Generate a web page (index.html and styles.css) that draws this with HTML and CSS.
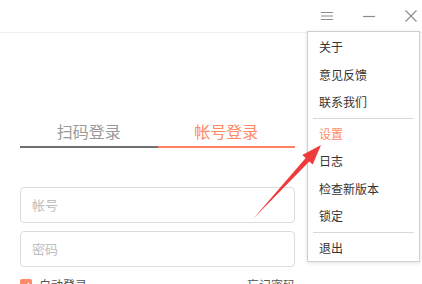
FILE: index.html
```html
<!DOCTYPE html>
<html lang="zh-CN">
<head>
    <meta charset="UTF-8">
    <meta name="viewport" content="width=device-width, initial-scale=1.0">
    <title>登录</title>
    <link rel="stylesheet" href="styles.css">
</head>
<body>
    <div class="window">
        <div class="titlebar">
            <span class="tb-btn">
                <svg width="12" height="10" viewBox="0 0 12 10"><path d="M0 1.5H12M0 5H12M0 8.5H12" stroke="#8a8a8a" stroke-width="1"/></svg>
            </span>
            <span class="tb-btn">
                <svg width="12" height="10" viewBox="0 0 12 10"><path d="M0 5.5H12" stroke="#8a8a8a" stroke-width="1.2"/></svg>
            </span>
            <span class="tb-btn">
                <svg width="12" height="12" viewBox="0 0 12 12"><path d="M0.5 0.5L11.5 11.5M11.5 0.5L0.5 11.5" stroke="#8a8a8a" stroke-width="1.1"/></svg>
            </span>
        </div>

        <div class="login">
            <div class="tabs">
                <div class="tab">扫码登录</div>
                <div class="tab active">帐号登录</div>
            </div>
            <div class="field">帐号</div>
            <div class="field">密码</div>
            <div class="options">
                <label class="auto">
                    <span class="check"><svg width="12" height="12" viewBox="0 0 12 12"><path d="M3 6.2L5.2 8.3L9 4" fill="none" stroke="#fff" stroke-width="1.3"/></svg></span>
                    自动登录
                </label>
                <span class="forgot">忘记密码</span>
            </div>
        </div>

        <!-- dropdown from the menu button -->
        <ul class="menu">
            <li>关于</li>
            <li>意见反馈</li>
            <li>联系我们</li>
            <li class="sep"></li>
            <li class="hot">设置</li>
            <li>日志</li>
            <li>检查新版本</li>
            <li>锁定</li>
            <li class="sep"></li>
            <li>退出</li>
        </ul>

        <svg class="arrow" width="422" height="284" viewBox="0 0 422 284">
            <polygon points="253,219 305.7,158 302.3,155 321,145 312.7,164.4 309.3,161.4" fill="#ee3a3a"/>
        </svg>
    </div>
</body>
</html>
```

FILE: styles.css
```css
body {
    margin: 0;
    background-color: #fff;
    font-family: "Noto Sans CJK SC", "Noto Sans", sans-serif;
}

.window {
    position: relative;
    width: 422px;
    height: 284px;
    overflow: hidden;
}

.titlebar {
    height: 32px;
    border-bottom: 1px solid #f0f0f0;
    display: flex;
    justify-content: flex-end;
    align-items: center;
    padding-right: 5px;
    gap: 30px;
}

.tb-btn {
    display: flex;
    width: 12px;
    justify-content: center;
}

.login {
    margin-left: 20px;
    width: 275px;
}

.tabs {
    display: flex;
    margin-top: 83px;
}

.tab {
    flex: 1;
    text-align: center;
    font-size: 16px;
    line-height: 30px;
    color: #9a9a9a;
    border-bottom: 2px solid #707070;
}

.tab.active {
    color: #ff8a66;
    border-bottom-color: #ff8260;
}

.field {
    height: 34px;
    margin-top: 8px;
    border: 1px solid #dcdcdc;
    border-radius: 4px;
    padding-left: 11px;
    font-size: 13px;
    line-height: 34px;
    color: #bdbdbd;
}

.tabs + .field {
    margin-top: 39px;
}

.options {
    display: flex;
    justify-content: space-between;
    margin-top: 10px;
    font-size: 12px;
    line-height: 16px;
    color: #555;
}

.auto {
    display: flex;
    align-items: center;
    gap: 7px;
}

.check {
    display: flex;
    width: 12px;
    height: 12px;
    border-radius: 2px;
    background-color: #ff8a66;
}

.menu {
    position: absolute;
    left: 307px;
    top: 31px;
    width: 111px;
    margin: 0;
    padding: 1px 0 0;
    list-style: none;
    background-color: #fff;
    border: 1px solid #cfcfcf;
    box-shadow: 0 1px 4px rgba(0, 0, 0, 0.12);
    font-size: 12px;
    color: #333;
}

.menu li {
    height: 27.5px;
    line-height: 27.5px;
    padding-left: 11px;
}

.menu li.hot {
    color: #ff8a66;
}

.menu li.sep {
    height: 0;
    padding: 0;
    margin: 2px 5px 1px;
    border-top: 1px solid #d8d8d8;
}

.arrow {
    position: absolute;
    left: 0;
    top: 0;
    pointer-events: none;
}
```
